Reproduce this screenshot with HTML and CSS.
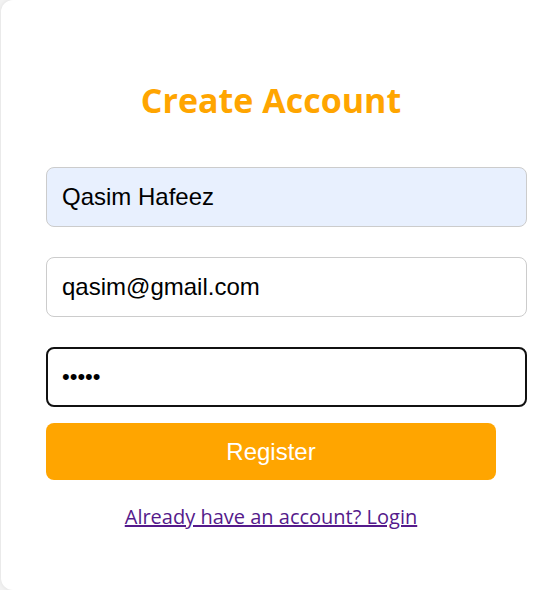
FILE: index.html
```html
<!DOCTYPE html>
<html lang="en">
<head>
<meta charset="utf-8">
<title>Create Account</title>
<link rel="stylesheet" href="styles.css">
</head>
<body>
  <main class="card">
    <form class="form">
      <h1 class="title">Create Account</h1>
      <input class="field field-autofill" type="text" value="Qasim Hafeez">
      <input class="field" type="email" value="qasim@gmail.com">
      <input class="field field-focus" type="password" value="12345">
      <button class="btn" type="button">Register</button>
      <a class="link" href="#">Already have an account? Login</a>
    </form>
  </main>
</body>
</html>
```

FILE: styles.css
```css
html, body {
  margin: 0;
  padding: 0;
  height: 100%;
  overflow: hidden;
  background: #f2f2f2;
}

.card {
  margin-left: 1px;
  width: 560px;
  height: 590px;
  background: #ffffff;
  border-radius: 12px;
  box-shadow: 0 0 4px rgba(0, 0, 0, 0.08);
  padding: 0 45px;
  box-sizing: border-box;
}

.form {
  width: 450px;
  display: flex;
  flex-direction: column;
  align-items: flex-start;
}

.title {
  align-self: stretch;
  margin: 77px 0 0;
  height: 46px;
  line-height: 46px;
  text-align: center;
  font-family: "Open Sans", "Noto Sans", sans-serif;
  font-weight: 700;
  font-size: 34px;
  color: #ffa500;
}

.field {
  box-sizing: border-box;
  width: 481px;
  height: 60px;
  margin: 0;
  padding: 0 15px;
  border: 1px solid #cccccc;
  border-radius: 8px;
  background: #ffffff;
  font-family: "Liberation Sans", Arial, sans-serif;
  font-size: 24px;
  color: #000000;
  outline: none;
}

.field + .field {
  margin-top: 30px;
}

.title + .field {
  margin-top: 44px;
}

.field-autofill {
  background: #e8f0fe;
}

.field-focus {
  border: 2px solid #111111;
  padding: 0 14px;
  font-size: 22px;
}

.btn {
  box-sizing: border-box;
  width: 450px;
  height: 57px;
  margin-top: 16px;
  border: none;
  border-radius: 8px;
  background: #ffa500;
  color: #ffffff;
  font-family: "Liberation Sans", Arial, sans-serif;
  font-size: 24px;
  cursor: pointer;
}

.link {
  align-self: stretch;
  margin-top: 23px;
  text-align: center;
  font-family: "Open Sans", "Noto Sans", sans-serif;
  font-size: 20px;
  color: #551a8b;
  text-decoration: underline;
}
```
